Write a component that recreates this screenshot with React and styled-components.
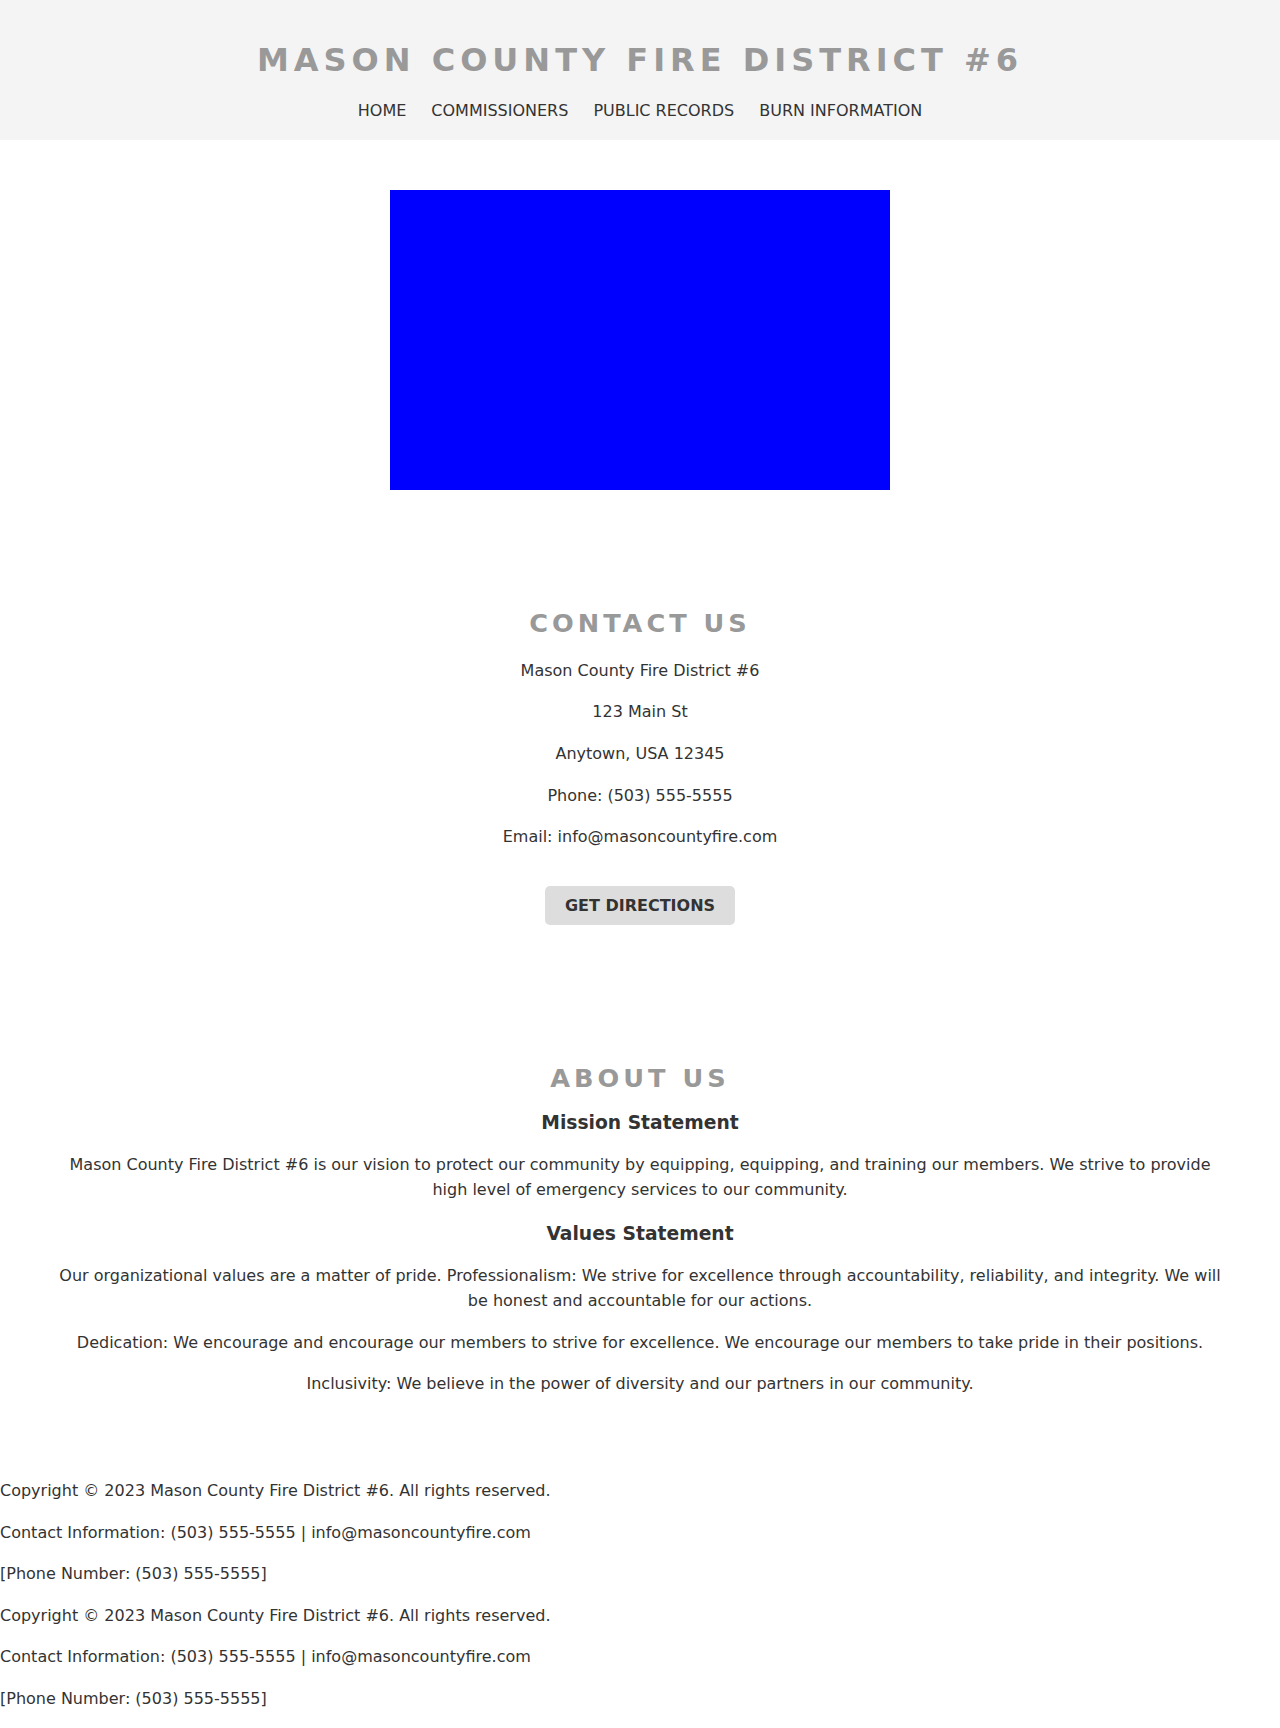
import React from "react";
import styled, { createGlobalStyle } from "styled-components";

const GlobalStyle = createGlobalStyle`
    body{
        margin: 0;
        font-family: "DejaVu Sans", sans-serif;
        font-size: 16px;
        line-height: 1.6;
        color: #333;
        background: #fff;
    }
`

const navItems = ["Home", "Commissioners", "Public Records", "Burn Information"];

const contactLines = [
    "Mason County Fire District #6",
    "123 Main St",
    "Anytown, USA 12345",
    "Phone: (503) 555-5555",
    "Email: info@masoncountyfire.com",
];

const footerLines = [
    "Copyright © 2023 Mason County Fire District #6. All rights reserved.",
    "Contact Information: (503) 555-5555 | info@masoncountyfire.com",
    "[Phone Number: (503) 555-5555]",
];

export default function App() {
    return (
        <>
            <GlobalStyle />
            <Header>
                <h1 className="title">Mason County Fire District #6</h1>
                <nav>
                    {navItems.map((item) => (
                        <a key={item} href="#">{item}</a>
                    ))}
                </nav>
            </Header>

            <Hero>
                <div className="banner" />
            </Hero>

            <Contact>
                <SectionTitle>Contact Us</SectionTitle>
                {contactLines.map((line) => (
                    <Text key={line}>{line}</Text>
                ))}
                <DirectionsBtn>Get Directions</DirectionsBtn>
            </Contact>

            <About>
                <SectionTitle>About Us</SectionTitle>
                <SubTitle>Mission Statement</SubTitle>
                <Text>
                    Mason County Fire District #6 is our vision to protect our community by equipping, equipping, and training our members. We strive to provide high level of emergency services to our community.
                </Text>
                <SubTitle>Values Statement</SubTitle>
                <Text>
                    Our organizational values are a matter of pride. Professionalism: We strive for excellence through accountability, reliability, and integrity. We will be honest and accountable for our actions.
                </Text>
                <Text>
                    Dedication: We encourage and encourage our members to strive for excellence. We encourage our members to take pride in their positions.
                </Text>
                <Text>
                    Inclusivity: We believe in the power of diversity and our partners in our community.
                </Text>
            </About>

            <Footer>
                {[0, 1].map((n) =>
                    footerLines.map((line) => <Text key={n + line}>{line}</Text>)
                )}
            </Footer>
        </>
    )
}

const Header = styled.header`
    background-color: #f4f4f4;
    padding: 35px 0 16px;
    text-align: center;
    .title{
        margin: 0 0 12px;
        font-size: 32px;
        line-height: 1.6;
        font-weight: 700;
        color: #999;
        text-transform: uppercase;
        letter-spacing: 5px;
    }
    nav{
        display: flex;
        justify-content: center;
        gap: 25px;
        a{
            color: #333;
            text-decoration: none;
            text-transform: uppercase;
            font-size: 16px;
        }
    }
`

const Hero = styled.section`
    display: flex;
    justify-content: center;
    padding-top: 50px;
    .banner{
        width: 500px;
        height: 300px;
        background-color: #0000ff;
    }
`

const Contact = styled.section`
    text-align: center;
    padding-top: 113px;
`

const SectionTitle = styled.h2`
    margin: 0 0 14px;
    font-size: 25.6px;
    line-height: 1.6;
    font-weight: 700;
    color: #999;
    text-transform: uppercase;
    letter-spacing: 4px;
`

const SubTitle = styled.h3`
    margin: 9px 0 14px;
    font-size: 18.72px;
    line-height: 1.6;
    font-weight: 700;
    color: #333;
`

const Text = styled.p`
    margin: 0 0 16px;
`

const DirectionsBtn = styled.button`
    margin-top: 20px;
    padding: 10px 20px;
    border: none;
    border-radius: 5px;
    background-color: #ddd;
    color: #333;
    font-family: "DejaVu Sans", sans-serif;
    font-size: 16px;
    font-weight: 700;
    text-transform: uppercase;
    cursor: pointer;
`

const About = styled.section`
    text-align: center;
    max-width: 1170px;
    margin: 0 auto;
    padding-top: 133px;
    ${SectionTitle}{
        margin-bottom: 0;
    }
`

const Footer = styled.footer`
    padding-top: 65px;
`
